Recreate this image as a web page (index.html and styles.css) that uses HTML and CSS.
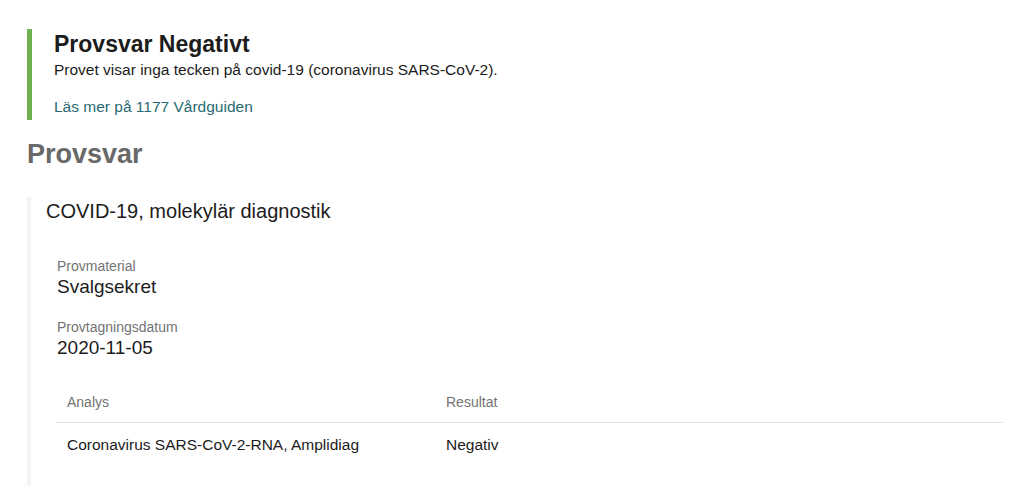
FILE: index.html
```html
<!DOCTYPE html>
<html lang="sv">
<head>
  <meta charset="UTF-8">
  <meta name="viewport" content="width=device-width, initial-scale=1.0">
  <title>Provsvar</title>
  <link rel="stylesheet" href="styles.css">
</head>
<body>

<div class="page">

  <div class="alert">
    <h1>Provsvar Negativt</h1>
    <p>Provet visar inga tecken på covid-19 (coronavirus SARS-CoV-2).</p>
    <a href="#">Läs mer på 1177 Vårdguiden</a>
  </div>

  <h2>Provsvar</h2>

  <div class="card">
    <h3>COVID-19, molekylär diagnostik</h3>

    <div class="fields">
      <div class="label">Provmaterial</div>
      <div class="value">Svalgsekret</div>
      <div class="label second">Provtagningsdatum</div>
      <div class="value">2020-11-05</div>
    </div>

    <table class="results">
      <colgroup>
        <col class="col-analys">
        <col>
      </colgroup>
      <thead>
        <tr>
          <th>Analys</th>
          <th>Resultat</th>
        </tr>
      </thead>
      <tbody>
        <tr>
          <td>Coronavirus SARS-CoV-2-RNA, Amplidiag</td>
          <td>Negativ</td>
        </tr>
      </tbody>
    </table>
  </div>

</div>

</body>
</html>
```

FILE: styles.css
```css
body {
  margin: 0;
  font-family: "Liberation Sans", Arial, sans-serif;
  color: #1c1c1c;
  background: #fff;
}
.page {
  padding: 29px 21px 0 27px;
}
.alert {
  border-left: 5px solid #6fb052;
  padding: 2px 0 3px 22px;
}
.alert h1 {
  margin: 0;
  font-size: 23px;
  line-height: 26px;
  font-weight: bold;
}
.alert p {
  margin: 3px 0 0;
  font-size: 15.5px;
  line-height: 20px;
}
.alert a {
  display: block;
  margin-top: 17px;
  font-size: 15.5px;
  line-height: 20px;
  color: #2a6a72;
  text-decoration: none;
}
h2 {
  margin: 19px 0 0;
  font-size: 27px;
  line-height: 30px;
  color: #696969;
}
.card {
  margin-top: 28px;
  border-left: 4px solid #f4f4f4;
  padding: 3px 0 40px 15px;
}
.card h3 {
  margin: 0;
  font-size: 20px;
  line-height: 22px;
  font-weight: normal;
}
.fields {
  padding-left: 11px;
  margin-top: 36px;
}
.label {
  font-size: 14px;
  line-height: 16px;
  color: #737373;
}
.label.second {
  margin-top: 21px;
}
.value {
  margin-top: 2px;
  font-size: 19px;
  line-height: 22px;
}
.results {
  margin: 24px 0 0 10px;
  width: calc(100% - 10px);
  border-collapse: collapse;
  table-layout: fixed;
}
.col-analys {
  width: 379px;
}
.results th {
  text-align: left;
  font-weight: normal;
  font-size: 14px;
  line-height: 16px;
  color: #737373;
  padding: 11px 11px 12px;
  border-bottom: 1px solid #e2e2e2;
}
.results td {
  font-size: 15.5px;
  line-height: 20px;
  padding: 12px 11px;
}
```
